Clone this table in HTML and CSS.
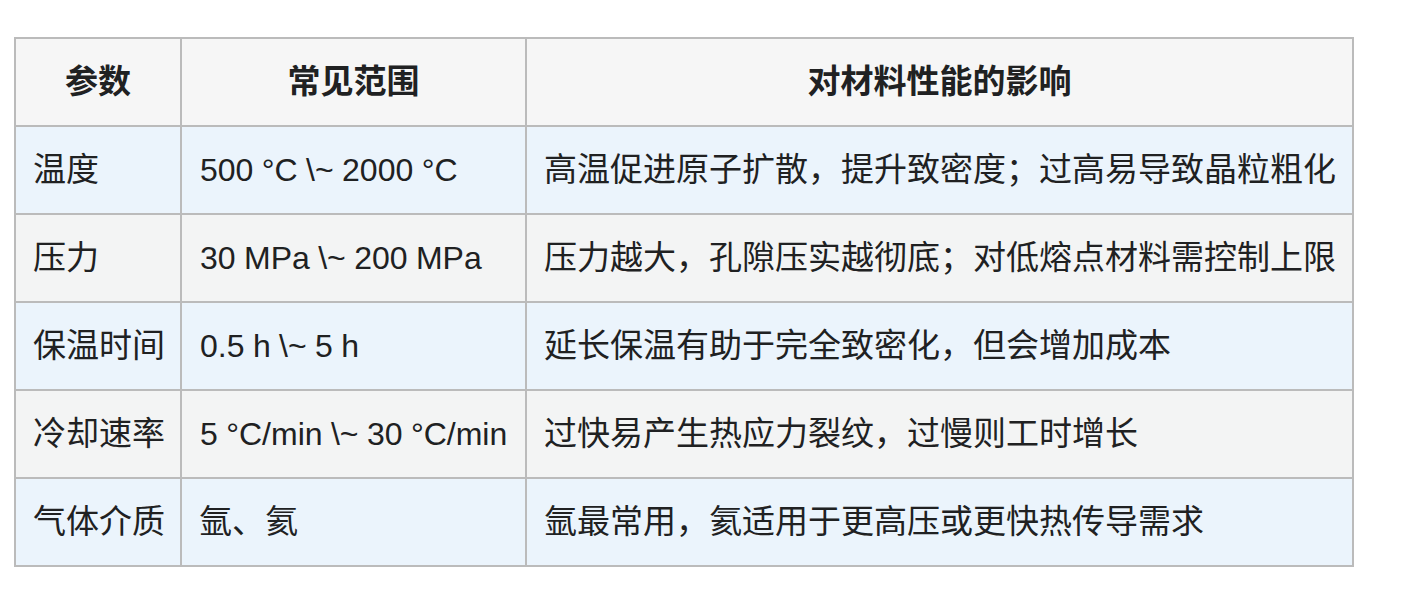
FILE: index.html
```html
<!DOCTYPE html>
<html lang="zh">
<head>
<meta charset="utf-8">
<link rel="stylesheet" href="styles.css">
</head>
<body>
<table class="params">
  <colgroup>
    <col class="c1">
    <col class="c2">
    <col class="c3">
  </colgroup>
  <thead>
    <tr><th>参数</th><th>常见范围</th><th>对材料性能的影响</th></tr>
  </thead>
  <tbody>
    <tr class="odd"><td class="zh">温度</td><td class="num">500 °C \~ 2000 °C</td><td class="zh">高温促进原子扩散，提升致密度；过高易导致晶粒粗化</td></tr>
    <tr class="even"><td class="zh">压力</td><td class="num">30 MPa \~ 200 MPa</td><td class="zh">压力越大，孔隙压实越彻底；对低熔点材料需控制上限</td></tr>
    <tr class="odd"><td class="zh">保温时间</td><td class="num">0.5 h \~ 5 h</td><td class="zh">延长保温有助于完全致密化，但会增加成本</td></tr>
    <tr class="even"><td class="zh">冷却速率</td><td class="num">5 °C/min \~ 30 °C/min</td><td class="zh">过快易产生热应力裂纹，过慢则工时增长</td></tr>
    <tr class="odd"><td class="zh">气体介质</td><td class="zh">氩、氦</td><td class="zh">氩最常用，氦适用于更高压或更快热传导需求</td></tr>
  </tbody>
</table>
</body>
</html>
```

FILE: styles.css
```css
html, body {
  margin: 0;
  padding: 0;
  background: #ffffff;
}
body {
  padding: 37px 0 0 14px;
  font-family: "Liberation Sans", Arial, "Noto Sans CJK SC", sans-serif;
  color: #202122;
}
.params {
  border-collapse: collapse;
  table-layout: fixed;
  width: 1338px;
  border: 2px solid #bbbbbb;
  font-size: 32px;
}
.c1 { width: 166px; }
.c2 { width: 345px; }
.c3 { width: 827px; }
.params th,
.params td {
  border: 2px solid #bbbbbb;
  padding: 16px 17px;
  line-height: 54px;
  white-space: nowrap;
}
.params th {
  background: #f6f6f6;
  font-weight: bold;
  font-size: 33px;
  text-align: center;
}
.params td {
  text-align: left;
}
.params td.zh {
  font-size: 33px;
}
.params td.num {
  font-size: 32px;
  padding-left: 18px;
  word-spacing: -0.5px;
}
.params tr.odd td {
  background: #ebf4fc;
}
.params tr.even td {
  background: #f3f4f4;
}
```
